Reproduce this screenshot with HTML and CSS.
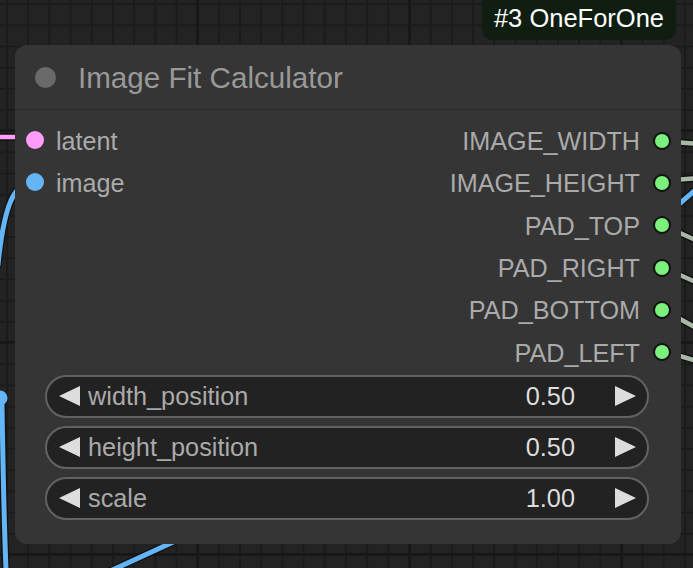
FILE: index.html
```html
<!DOCTYPE html>
<html>
<head>
<meta charset="utf-8">
<link rel="stylesheet" href="styles.css">
</head>
<body>
<div class="canvas">
  <svg class="wires" width="693" height="568" viewBox="0 0 693 568">
    <g class="outline">
      <path d="M0 137 L30 137"/>
      <path d="M36 181 C14 181 4 205 -2 265"/>
      <path d="M2 405 C3 470 4 520 6 570"/>
      <path d="M182 538 L108 572"/>
      <path d="M660 141 L700 144"/>
      <path d="M660 181 L700 178"/>
      <path d="M660 224 L700 242"/>
      <path d="M660 266 L700 284"/>
      <path d="M660 308 L700 330"/>
      <path d="M660 350 L700 362"/>
      <path d="M670 212 L700 186"/>
    </g>
    <path class="w-pink" d="M0 137 L30 137"/>
    <path class="w-blue" d="M36 181 C14 181 4 205 -2 265"/>
    <path class="w-blue" d="M2 405 C3 470 4 520 6 570"/>
    <path class="w-blue" d="M182 538 L108 572"/>
    <path class="w-grey" d="M660 141 L700 144"/>
    <path class="w-grey" d="M660 181 L700 178"/>
    <path class="w-grey" d="M660 224 L700 242"/>
    <path class="w-grey" d="M660 266 L700 284"/>
    <path class="w-grey" d="M660 308 L700 330"/>
    <path class="w-grey" d="M660 350 L700 362"/>
    <path class="w-blue" d="M670 212 L700 186"/>
    <circle class="ext-dot" cx="0" cy="398" r="7.5"/>
  </svg>

  <div class="badge">#3 OneForOne</div>

  <div class="node">
    <div class="node-title">
      <span class="title-dot"></span>
      <span class="title-text">Image Fit Calculator</span>
    </div>
    <div class="slots">
      <div class="inputs">
        <div class="slot-row"><span class="dot dot-pink"></span><span class="slot-label">latent</span></div>
        <div class="slot-row"><span class="dot dot-blue"></span><span class="slot-label">image</span></div>
      </div>
      <div class="outputs">
        <div class="slot-row out"><span class="slot-label">IMAGE_WIDTH</span><span class="dot dot-green"></span></div>
        <div class="slot-row out"><span class="slot-label">IMAGE_HEIGHT</span><span class="dot dot-green"></span></div>
        <div class="slot-row out"><span class="slot-label">PAD_TOP</span><span class="dot dot-green"></span></div>
        <div class="slot-row out"><span class="slot-label">PAD_RIGHT</span><span class="dot dot-green"></span></div>
        <div class="slot-row out"><span class="slot-label">PAD_BOTTOM</span><span class="dot dot-green"></span></div>
        <div class="slot-row out"><span class="slot-label">PAD_LEFT</span><span class="dot dot-green"></span></div>
      </div>
    </div>
    <div class="widgets">
      <div class="widget">
        <span class="arrow arrow-left"></span>
        <span class="w-label">width_position</span>
        <span class="w-value">0.50</span>
        <span class="arrow arrow-right"></span>
      </div>
      <div class="widget">
        <span class="arrow arrow-left"></span>
        <span class="w-label">height_position</span>
        <span class="w-value">0.50</span>
        <span class="arrow arrow-right"></span>
      </div>
      <div class="widget">
        <span class="arrow arrow-left"></span>
        <span class="w-label">scale</span>
        <span class="w-value">1.00</span>
        <span class="arrow arrow-right"></span>
      </div>
    </div>
  </div>
</div>
</body>
</html>
```

FILE: styles.css
```css
html, body {
  margin: 0;
  padding: 0;
  width: 693px;
  height: 568px;
  overflow: hidden;
  font-family: "Liberation Sans", Arial, sans-serif;
}

.canvas {
  position: relative;
  width: 693px;
  height: 568px;
  overflow: hidden;
  background-color: #232323;
  background-image:
    linear-gradient(90deg, #181818 3px, transparent 3px),
    linear-gradient(0deg, #181818 3px, transparent 3px),
    linear-gradient(90deg, #1b1b1b 2px, transparent 2px),
    linear-gradient(0deg, #1b1b1b 2px, transparent 2px);
  background-size: 212px 212px, 212px 212px, 21.2px 21.2px, 21.2px 21.2px;
  background-position: 196px 0, 0 556px, 6px 0, 0 5px;
}

.wires {
  position: absolute;
  left: 0;
  top: 0;
}

.wires path {
  fill: none;
  stroke-linecap: round;
}

.outline path {
  stroke: #111;
  stroke-width: 7.5;
}

.w-pink { stroke: #ff9cf9; stroke-width: 4.5; }
.w-blue { stroke: #64b5f6; stroke-width: 5; }
.w-grey { stroke: #a9b7a7; stroke-width: 4.5; }
.ext-dot { fill: #64b5f6; }

.badge {
  position: absolute;
  left: 482px;
  top: -10px;
  width: 194px;
  height: 50px;
  box-sizing: border-box;
  padding-top: 16px;
  border-radius: 10px;
  background: #0f1e10;
  color: #ffffff;
  font-size: 25.5px;
  line-height: 25.5px;
  text-align: center;
}

.node {
  position: absolute;
  left: 15px;
  top: 45px;
  width: 666px;
  height: 499px;
  box-sizing: border-box;
  background: #353535;
  border-radius: 12px;
  display: flex;
  flex-direction: column;
}

.node-title {
  height: 64px;
  border-bottom: 1px solid #2a2a2a;
  display: flex;
  align-items: center;
  padding-left: 20px;
}

.title-dot {
  width: 21px;
  height: 21px;
  border-radius: 50%;
  background: #6a6a6a;
  margin-right: 22px;
}

.title-text {
  color: #999999;
  font-size: 29.6px;
  line-height: 1;
  margin-top: 1px;
}

.slots {
  display: flex;
  justify-content: space-between;
  padding-top: 9px;
}

.inputs, .outputs {
  display: flex;
  flex-direction: column;
}

.slot-row {
  height: 42.3px;
  display: flex;
  align-items: center;
  gap: 12px;
  padding-left: 11px;
}

.slot-row.out {
  justify-content: flex-end;
  padding-left: 0;
  padding-right: 10px;
  gap: 13px;
}

.slot-label {
  color: #aaaaaa;
  font-size: 25.2px;
  line-height: 1;
  margin-top: 3px;
}

.dot {
  width: 18px;
  height: 18px;
  border-radius: 50%;
  box-sizing: border-box;
  flex: none;
}

.dot-pink { background: #ff9cf9; }
.dot-blue { background: #64b5f6; }
.dot-green {
  background: #7cf07c;
  border: 2px solid #111;
  margin-top: 1px;
}

.widgets {
  display: flex;
  flex-direction: column;
  gap: 8px;
  padding: 2px 32px 0 30px;
}

.widget {
  height: 43px;
  box-sizing: border-box;
  border: 2px solid #626262;
  border-radius: 22px;
  background: #222222;
  display: flex;
  align-items: center;
  padding: 0 11px 0 12px;
  font-size: 25.3px;
}

.w-label {
  color: #aaaaaa;
  margin-left: 8px;
  flex: 1;
}

.w-value {
  color: #dddddd;
  margin-right: 40px;
}

.arrow {
  width: 0;
  height: 0;
  border-top: 10px solid transparent;
  border-bottom: 10px solid transparent;
}

.arrow-left {
  border-right: 21px solid #dddddd;
}

.arrow-right {
  border-left: 21px solid #dddddd;
}
```
